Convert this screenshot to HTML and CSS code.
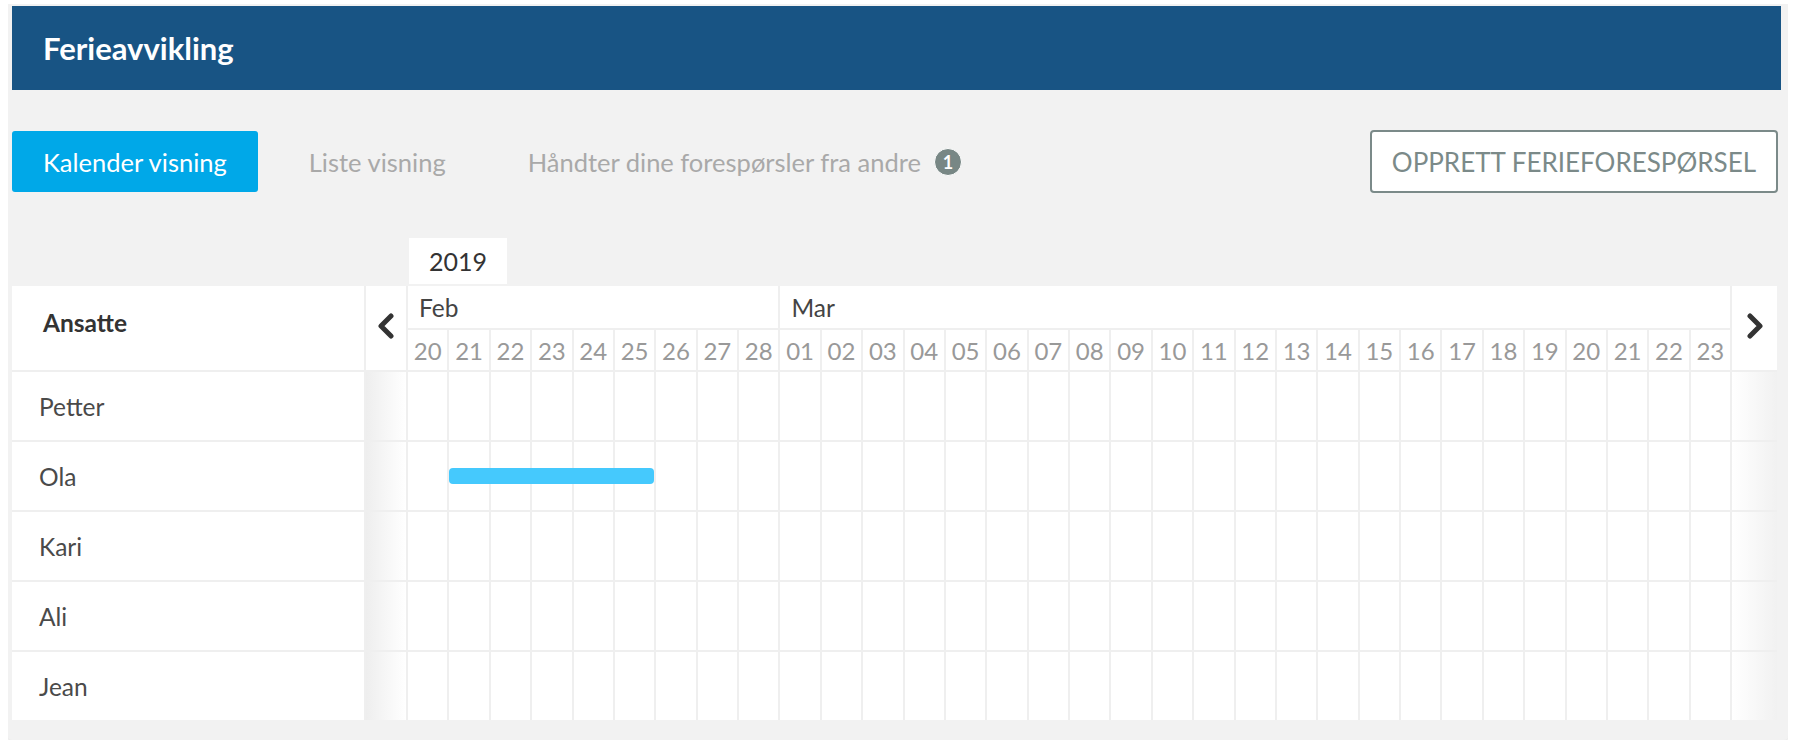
FILE: index.html
```html
<!DOCTYPE html>
<html lang="no">
<head>
  <meta charset="UTF-8">
  <meta name="viewport" content="width=device-width, initial-scale=1.0">
  <title>Ferieavvikling</title>
  <link rel="stylesheet" href="styles.css">
</head>
<body>
  <div class="card">
    <div class="topbar">
      <h1>Ferieavvikling</h1>
    </div>

    <div class="toolbar">
      <div class="tabs">
        <a href="#" class="tab active">Kalender visning</a>
        <a href="#" class="tab">Liste visning</a>
        <a href="#" class="tab">Håndter dine forespørsler fra andre <span class="badge">1</span></a>
      </div>
      <button class="btn-outline">Opprett ferieforespørsel</button>
    </div>

    <div class="year-row"><span class="year">2019</span></div>

    <div class="grid" id="grid">
      <div class="head-label">Ansatte</div>
      <div class="nav">
        <svg width="18" height="26" viewBox="0 0 18 26"><polyline points="14,3 4,13 14,23" fill="none" stroke="#333" stroke-width="5" stroke-linecap="round" stroke-linejoin="round"/></svg>
      </div>
      <div class="month feb">Feb</div>
      <div class="month mar">Mar</div>
      <div class="nav">
        <svg width="18" height="26" viewBox="0 0 18 26"><polyline points="4,3 14,13 4,23" fill="none" stroke="#333" stroke-width="5" stroke-linecap="round" stroke-linejoin="round"/></svg>
      </div>
    </div>
  </div>

  <script>
    const days = [];
    for (let d = 20; d <= 28; d++) days.push(d);
    for (let d = 1; d <= 23; d++) days.push(d);

    const employees = ["Petter", "Ola", "Kari", "Ali", "Jean"];
    // vacation: first day index + number of days
    const vacations = { Ola: { start: 1, length: 5 } };

    const grid = document.getElementById("grid");
    let html = days.map(d => `<div class="day">${String(d).padStart(2, "0")}</div>`).join("");

    employees.forEach(name => {
      html += `<div class="name">${name}</div><div class="shade"></div>`;
      days.forEach((d, i) => {
        const v = vacations[name];
        let bar = "";
        if (v && v.start === i) {
          bar = `<span class="bar" style="width: calc(${v.length * 100}% + ${(v.length - 1) * 2}px)"></span>`;
        }
        html += `<div class="cell">${bar}</div>`;
      });
      html += `<div class="fade"></div>`;
    });

    grid.insertAdjacentHTML("beforeend", html);
  </script>
</body>
</html>
```

FILE: styles.css
```css
body {
  margin: 4px 10px 12px 8px;
  background: #fff;
  font-family: Lato, "Open Sans", sans-serif;
}
.card {
  background: #f2f2f2;
  padding: 2px 7px 20px 4px;
  border-radius: 0 0 4px 4px;
  box-shadow: 0 1px 6px rgba(0,0,0,0.18);
}
.topbar {
  background: #185484;
  height: 84px;
  display: flex;
  align-items: center;
  padding-left: 31px;
}
.topbar h1 {
  margin: 0;
  color: #fff;
  font-size: 31px;
  font-weight: 700;
}

.toolbar {
  display: flex;
  justify-content: space-between;
  align-items: center;
  margin: 40px 3px 0 0;
}
.tabs { display: flex; gap: 20px; }
.tab {
  height: 61px;
  padding: 0 31px;
  display: flex;
  align-items: center;
  color: #a9a9a9;
  font-size: 25.5px;
  text-decoration: none;
  border-radius: 3px;
}
.tab.active { background: #00a8e8; color: #fff; }
.badge {
  width: 26px;
  height: 26px;
  margin-left: 13px;
  border: 1px solid #fff;
  border-radius: 50%;
  background: #788785;
  color: #fff;
  font-size: 18px;
  font-weight: 700;
  display: inline-flex;
  align-items: center;
  justify-content: center;
}
.btn-outline {
  height: 63px;
  padding: 0 20px;
  border: 2px solid #7b8a89;
  border-radius: 4px;
  background: #fff;
  color: #7b8a89;
  font-family: inherit;
  font-size: 26px;
  text-transform: uppercase;
  cursor: pointer;
}

.year-row { margin-top: 45px; padding-left: 397px; }
.year {
  display: inline-block;
  width: 98px;
  height: 46px;
  line-height: 46px;
  text-align: center;
  background: #fff;
  color: #333;
  font-size: 25px;
}

.grid {
  margin: 2px 4px 0 0;
  display: grid;
  grid-template-columns: 352px 40px repeat(32, 1fr) 45px;
  grid-template-rows: 42px 40px repeat(5, 68px);
  gap: 2px;
  background: #efefef;
}
.head-label {
  grid-row: span 2;
  background: #fff;
  display: flex;
  align-items: center;
  padding: 0 0 12px 31px;
  color: #333;
  font-size: 24.5px;
  font-weight: 700;
}
.nav {
  grid-row: span 2;
  background: #fff;
  display: flex;
  align-items: center;
  justify-content: center;
  padding-bottom: 5px;
}
.month {
  background: #fff;
  display: flex;
  align-items: center;
  padding-left: 11px;
  color: #444;
  font-size: 24.5px;
}
.feb { grid-column: span 9; }
.mar { grid-column: span 23; }
.day {
  background: #fff;
  display: flex;
  align-items: center;
  justify-content: center;
  color: #999;
  font-size: 24px;
}
.name {
  background: #fff;
  display: flex;
  align-items: center;
  padding-left: 27px;
  color: #4a4a4a;
  font-size: 24.5px;
}
.shade { background: linear-gradient(to right, #eeeeee, #fff); }
.cell { background: #fff; position: relative; }
.fade { background: linear-gradient(to right, #fff, #f1f1f1); }
.bar {
  position: absolute;
  left: 0;
  top: 50%;
  height: 16px;
  margin-top: -8px;
  border-radius: 4px;
  background: #45c9fd;
  z-index: 1;
}
```
